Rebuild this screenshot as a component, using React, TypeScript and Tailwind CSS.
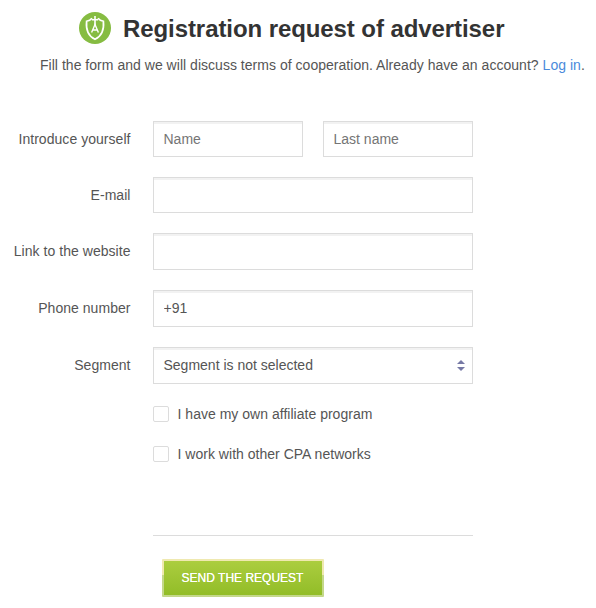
import { useState } from 'react';
import type { ReactNode } from 'react';

const inputClass =
    'block w-full rounded-none border border-[#dcdcdc] bg-white px-[9.5px] text-sm text-[#555] shadow-[inset_0_2px_0_#f2f2f2] outline-none placeholder:text-[#757575] placeholder:opacity-100';

function Logo() {
    return (
        <svg className="h-8 w-8 shrink-0" viewBox="0 0 32 32" fill="none">
            <circle cx="16" cy="16" r="16" fill="#86bc42" />
            <path d="M13 6.2C11.8 7.7 10 8.7 7.6 9.3C6.8 17.5 8.6 23.7 16 27.3C23.4 23.7 25.2 17.5 24.4 9.3C22 8.7 20.2 7.7 19 6.2" stroke="#fff" strokeWidth="1.7" />
            <path d="M16 4V13M12.8 7.8H19.2" stroke="#fff" strokeWidth="1.6" />
            <path d="M12.6 20.6L16 12.6L19.4 20.6M13.6 18H18.4" stroke="#fff" strokeWidth="1.4" />
        </svg>
    );
}

function Field({ label, className, children }: { label: string; className: string; children: ReactNode }) {
    return (
        <div className={`flex ${className}`}>
            <label className="w-[130.5px] shrink-0 pt-2 text-right tracking-[0.04px]">{label}</label>
            <div className="ml-[22.5px] flex h-full w-80 gap-5">{children}</div>
        </div>
    );
}

function Checkbox({ label }: { label: string }) {
    const [checked, setChecked] = useState(false);

    return (
        <label className="flex h-4 items-center gap-[8.5px]">
            <input
                type="checkbox"
                checked={checked}
                onChange={(e) => setChecked(e.target.checked)}
                className="h-4 w-4 appearance-none rounded-[2px] border border-[#dcdcdc] bg-white checked:bg-[#9fc63b]"
            />
            <span className="tracking-[0.02px]">{label}</span>
        </label>
    );
}

export default function App() {
    const [phone, setPhone] = useState('+91');

    return (
        <div className="h-[608px] w-[596px] overflow-hidden bg-white font-['Liberation_Sans',Arial,sans-serif] text-sm text-[#555]">
            {/* Header */}
            <header className="pt-3">
                <div className="flex h-8 items-center pl-[79px]">
                    <Logo />
                    <h1 className="ml-3 whitespace-nowrap pt-0.5 text-2xl font-bold tracking-[-0.08px] text-[#333]">Registration request of advertiser</h1>
                </div>
                <p className="mt-[11px] whitespace-nowrap pl-10 tracking-[0.027px]">
                    Fill the form and we will discuss terms of cooperation. Already have an account?{' '}
                    <a href="#" className="text-[#4a8adb]">Log in</a>.
                </p>
            </header>

            {/* Form */}
            <form className="mt-[46px]" onSubmit={(e) => e.preventDefault()}>
                <Field label="Introduce yourself" className="h-9">
                    <input className={inputClass} placeholder="Name" />
                    <input className={inputClass} placeholder="Last name" />
                </Field>
                <Field label="E-mail" className="mt-5 h-9">
                    <input type="email" className={inputClass} />
                </Field>
                <Field label="Link to the website" className="mt-5 h-[37px]">
                    <input className={inputClass} />
                </Field>
                <Field label="Phone number" className="mt-5 h-[37px]">
                    <input className={`${inputClass} pb-px`} value={phone} onChange={(e) => setPhone(e.target.value)} />
                </Field>
                <Field label="Segment" className="mt-5 h-[37px]">
                    <button type="button" className={`${inputClass} flex items-center justify-between pr-[7px]`}>
                        <span className="pb-px">Segment is not selected</span>
                        <svg className="h-[11px] w-2" viewBox="0 0 8 11" fill="#7679a5">
                            <path d="M4 0L8 4H0ZM0 7H8L4 11Z" />
                        </svg>
                    </button>
                </Field>

                <div className="ml-[153px] mt-[22px] flex h-[130px] w-80 flex-col gap-6 border-b border-[#dcdcdc]">
                    <Checkbox label="I have my own affiliate program" />
                    <Checkbox label="I work with other CPA networks" />
                </div>

                <button
                    type="submit"
                    className="ml-[162px] mt-[23px] h-[38px] w-[162px] rounded-[1px] bg-linear-to-b from-[#efe9b0] from-42% to-[#c4d88a] to-42% p-0.5 text-xs text-white"
                >
                    <span className="flex h-full items-center justify-center bg-linear-to-b from-[#abcd3f] to-[#92bd27] pr-px [text-shadow:0_0_0.5px_#fff]">
                        SEND THE REQUEST
                    </span>
                </button>
            </form>
        </div>
    );
}
